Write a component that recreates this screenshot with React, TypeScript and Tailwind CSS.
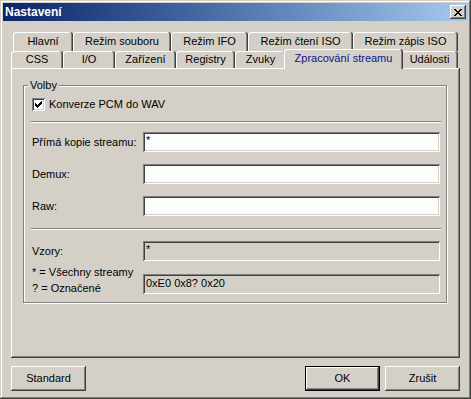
import React from 'react';

const raised =
  'shadow-[inset_-1px_-1px_#404040,inset_1px_1px_#ffffff,inset_-2px_-2px_#808080,inset_2px_2px_#d4d0c8]';
const sunken =
  'shadow-[inset_1px_1px_#808080,inset_-1px_-1px_#ffffff,inset_2px_2px_#404040,inset_-2px_-2px_#d4d0c8]';
const tabEdge =
  'shadow-[inset_-1px_0_#404040,inset_1px_1px_#ffffff,inset_-2px_0_#808080]';

const topRow = [
  { label: 'Hlavní', w: 'w-[60px]' },
  { label: 'Režim souboru', w: 'w-[98px]' },
  { label: 'Režim IFO', w: 'w-[77px]' },
  { label: 'Režim čtení ISO', w: 'w-[105px]' },
  { label: 'Režim zápis ISO', w: 'w-[105px]' },
];

const bottomRow = [
  { label: 'CSS', w: 'w-[52px]' },
  { label: 'I/O', w: 'w-[52px]' },
  { label: 'Zařízení', w: 'w-[61px]' },
  { label: 'Registry', w: 'w-[59px]' },
  { label: 'Zvuky', w: 'w-[51px]' },
  { label: 'Zpracování streamu', w: 'w-[119px]', active: true },
  { label: 'Události', w: 'w-[57px]' },
];

const CloseGlyph = () => (
  <svg width="8" height="7" viewBox="0 0 8 7" shapeRendering="crispEdges">
    <path
      fill="#000"
      d="M0 0h2v1H0zM6 0h2v1H6zM1 1h2v1H1zM5 1h2v1H5zM2 2h4v1H2zM3 3h2v1H3zM2 4h4v1H2zM1 5h2v1H1zM5 5h2v1H5zM0 6h2v1H0zM6 6h2v1H6z"
    />
  </svg>
);

const CheckGlyph = () => (
  <svg width="7" height="7" viewBox="0 0 7 7" shapeRendering="crispEdges">
    <path
      fill="#000"
      d="M6 0h1v1H6zM5 1h2v1H5zM0 2h1v1H0zM4 2h3v1H4zM0 3h2v1H0zM3 3h3v1H3zM0 4h5v1H0zM1 5h3v1H1zM2 6h1v1H2z"
    />
  </svg>
);

const Edit = ({ value = '', readOnly = false, pad = 'pt-[2px]' }: { value?: string; readOnly?: boolean; pad?: string }) => (
  <div
    className={`h-[20px] w-[297px] pl-[3px] ${pad} leading-[13px] whitespace-pre ${sunken} ${
      readOnly ? 'bg-[#d4d0c8]' : 'bg-[#fcfefc]'
    }`}
  >
    {value}
  </div>
);

const Button = ({ label, primary = false }: { label: string; primary?: boolean }) => (
  <div
    className={`flex h-[25px] w-[75px] items-center justify-center bg-[#d4d0c8] ${raised} ${
      primary ? 'border border-black' : ''
    }`}
  >
    {label}
  </div>
);

export default function App() {
  return (
    <div
      className={`h-[399px] w-[471px] bg-[#d4d0c8] p-[3px] font-['Liberation_Sans',Arial,sans-serif] text-[11px] leading-[13px] text-black shadow-[inset_-1px_-1px_#404040,inset_1px_1px_#d4d0c8,inset_-2px_-2px_#808080,inset_2px_2px_#ffffff]`}
    >
      {/* Title bar */}
      <div className="flex h-[18px] items-center justify-between bg-linear-to-r from-[#0a246a] to-[#a6caf0] pl-[2px] pr-[2px]">
        <span className="text-[12px] font-bold text-white">Nastavení</span>
        <div className={`flex h-[14px] w-[16px] items-center justify-center bg-[#d4d0c8] pr-[1px] ${raised}`}>
          <CloseGlyph />
        </div>
      </div>

      <div className="px-[8px] pt-[11px]">
        {/* Back tab row */}
        <div className="flex h-[19px] pl-[2px]">
          {topRow.map(t => (
            <div
              key={t.label}
              className={`flex h-[19px] items-start justify-center rounded-t-[3px] bg-[#d4d0c8] pt-[3px] ${tabEdge} ${t.w}`}
            >
              {t.label}
            </div>
          ))}
        </div>

        {/* Front tab row */}
        <div className="flex h-[17px] items-end">
          {bottomRow.map(t =>
            t.active ? (
              <div
                key={t.label}
                className={`relative z-10 -mx-[2px] -mb-[1px] flex h-[20px] items-start justify-center rounded-t-[3px] bg-[#d4d0c8] pt-[3px] text-[#10108c] ${tabEdge} ${t.w}`}
              >
                {t.label}
              </div>
            ) : (
              <div
                key={t.label}
                className={`flex h-[17px] items-start justify-center rounded-t-[3px] bg-[#d4d0c8] pt-[2px] ${tabEdge} ${t.w}`}
              >
                {t.label}
              </div>
            )
          )}
        </div>

        {/* Tab page */}
        <div className={`h-[290px] w-[449px] pl-[12px] pt-[17px] ${raised}`}>
          <div className="relative h-[218px] w-[424px] border border-[#808080] pb-[10px] pl-[7px] pr-[5px] pt-[12px] shadow-[1px_1px_0_#ffffff,inset_1px_1px_0_#ffffff]">
            <span className="absolute -top-[7px] left-[4px] bg-[#d4d0c8] px-[2px]">Volby</span>

            <div className="flex h-[13px] items-center gap-[4px] pl-[1px]">
              <div className={`flex h-[13px] w-[13px] items-center justify-center bg-white ${sunken}`}>
                <CheckGlyph />
              </div>
              <span>Konverze PCM do WAV</span>
            </div>

            <div className="mt-[10px] h-[2px] border-t border-b border-t-[#808080] border-b-white" />

            <div className="mt-[9px] grid grid-cols-[112px_297px] items-center gap-y-[12px]">
              <span className="pl-[1px]">Přímá kopie streamu:</span>
              <Edit value="*" />
              <span className="pl-[1px]">Demux:</span>
              <Edit />
              <span className="pl-[1px]">Raw:</span>
              <Edit />
            </div>

            <div className="mt-[12px] h-[2px] border-t border-b border-t-[#808080] border-b-white" />

            <div className="mt-[11px] grid grid-cols-[112px_297px] items-center gap-y-[11px]">
              <span className="pl-[1px]">Vzory:</span>
              <Edit value="*" readOnly />
              <div className="-mt-[8px] self-start pl-[1px] leading-[16px]">
                <div>* = Všechny streamy</div>
                <div>? = Označené</div>
              </div>
              <Edit value="0xE0 0x8? 0x20" readOnly pad="pt-[3px]" />
            </div>
          </div>
        </div>

        {/* Dialog buttons */}
        <div className="mt-[8px] flex gap-[5px]">
          <Button label="Standard" />
          <div className="ml-auto" />
          <Button label="OK" primary />
          <Button label="Zrušit" />
        </div>
      </div>
    </div>
  );
}
